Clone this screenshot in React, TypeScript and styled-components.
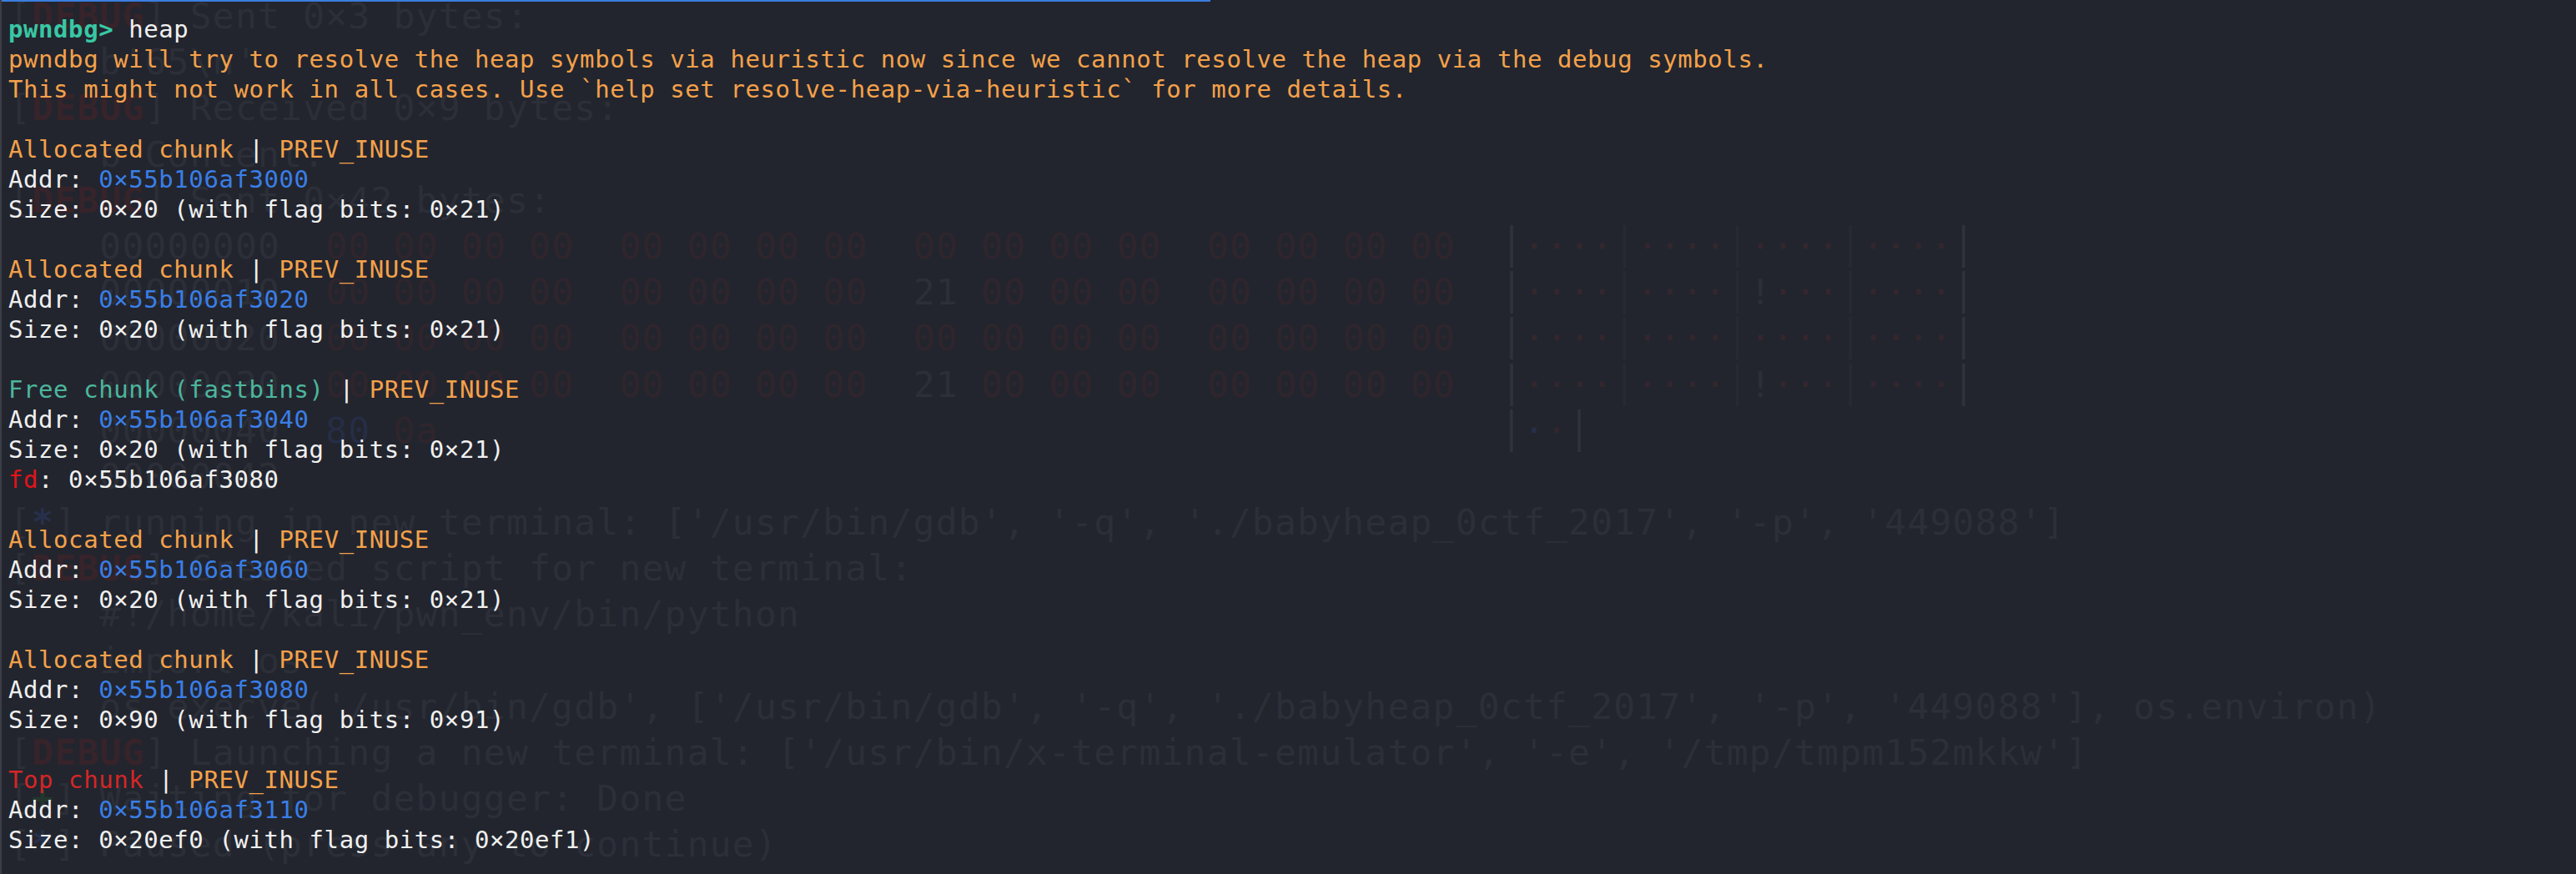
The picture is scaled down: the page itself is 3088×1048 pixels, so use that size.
import React from "react";
import styled, { createGlobalStyle } from "styled-components";

type ForeTone = "white" | "prompt" | "orange" | "blue" | "teal" | "red" | "topred";
type GhostTone = "text" | "debug" | "zero" | "high" | "star" | "plus" | "sep" | "sepDim" | "dotRed" | "dotBlue";

type Seg<T> = [string, T];

const Global = createGlobalStyle`
  html, body {
    margin: 0;
    padding: 0;
    background: #22252e;
  }
  body {
    overflow: hidden;
  }
`;

const Screen = styled.div`
  width: 3088px;
  height: 1048px;
  box-sizing: border-box;
  background: #22252e;
  border-left: 2px solid #3a3d45;
  display: flex;
  flex-direction: column;
  overflow: hidden;
`;

const ProgressBar = styled.div`
  flex: 0 0 2px;
  width: 1449px;
  background: #3b7ddd;
  position: relative;
  z-index: 2;
`;

const Stack = styled.div`
  flex: 1;
  min-height: 0;
  display: grid;
  grid-template: 1fr / 1fr;
  & > * {
    grid-area: 1 / 1;
  }
`;

const GhostLayer = styled.div`
  margin-top: -10px;
  padding-left: 9px;
  font-family: "DejaVu Sans Mono", "Liberation Mono", monospace;
  font-size: 43px;
  letter-spacing: 1.2px;
  line-height: 55.2px;
  color: #2d3039;
  white-space: pre;
`;

const GhostLine = styled.div`
  height: 55.2px;
`;

const ghostColors: Record<GhostTone, string> = {
  text: "#2c2f38",
  debug: "#37232a",
  zero: "#30252d",
  high: "#262d45",
  star: "#27304b",
  plus: "#24372e",
  sep: "#30333b",
  sepDim: "#272a33",
  dotRed: "#35262e",
  dotBlue: "#272e48",
};

const GhostSpan = styled.span<{ $tone: GhostTone }>`
  color: ${(p) => ghostColors[p.$tone]};
  font-weight: ${(p) => (p.$tone === "debug" || p.$tone === "star" || p.$tone === "plus" ? 700 : 400)};
`;

const ForeLayer = styled.div`
  padding: 15px 0 0 8px;
  font-family: "DejaVu Sans Mono", "Liberation Mono", monospace;
  font-size: 29px;
  letter-spacing: 0.57px;
  line-height: 36px;
  white-space: pre;
`;

const ForeLine = styled.div`
  height: 36px;
`;

const foreColors: Record<ForeTone, string> = {
  white: "#f0f0f0",
  prompt: "#38c8a4",
  orange: "#f4a14a",
  blue: "#3a7ee6",
  teal: "#4cb69c",
  red: "#e0141a",
  topred: "#d42626",
};

const ForeSpan = styled.span<{ $tone: ForeTone }>`
  color: ${(p) => foreColors[p.$tone]};
  font-weight: ${(p) => (p.$tone === "prompt" ? 700 : 400)};
`;

/* ---------- ghost (background terminal) content ---------- */

const dbg = (rest: string): Seg<GhostTone>[] => [
  ["[", "text"],
  ["DEBUG", "debug"],
  ["] " + rest, "text"],
];

const hexRow = (offset: string, has21: boolean): Seg<GhostTone>[] => {
  const segs: Seg<GhostTone>[] = [["    " + offset + "  ", "text"]];
  for (let g = 0; g < 4; g++) {
    for (let b = 0; b < 4; b++) {
      const is21 = has21 && g === 2 && b === 0;
      segs.push([is21 ? "21" : "00", is21 ? "text" : "zero"]);
      segs.push([b < 3 ? " " : "  ", "text"]);
    }
  }
  segs.push(["│", "sep"]);
  for (let g = 0; g < 4; g++) {
    if (has21 && g === 2) {
      segs.push(["!", "text"]);
      segs.push(["···", "dotRed"]);
    } else {
      segs.push(["····", "dotRed"]);
    }
    segs.push(["│", g < 3 ? "sepDim" : "sep"]);
  }
  return segs;
};

const ghostLines: Seg<GhostTone>[][] = [
  dbg("Sent 0×3 bytes:"),
  [["    b'65\\n'", "text"]],
  dbg("Received 0×9 bytes:"),
  [["    b'Content: '", "text"]],
  dbg("Sent 0×42 bytes:"),
  hexRow("00000000", false),
  hexRow("00000010", true),
  hexRow("00000020", false),
  hexRow("00000030", true),
  [
    ["    00000040  ", "text"],
    ["80", "high"],
    [" ", "text"],
    ["0a", "zero"],
    [" ".repeat(47), "text"],
    ["│", "sep"],
    ["·", "dotBlue"],
    ["·", "dotRed"],
    ["│", "sep"],
  ],
  [["    00000042", "text"]],
  [
    ["[", "text"],
    ["*", "star"],
    ["] running in new terminal: ['/usr/bin/gdb', '-q', './babyheap_0ctf_2017', '-p', '449088']", "text"],
  ],
  dbg("Created script for new terminal:"),
  [["    #!/home/kali/pwn_env/bin/python", "text"]],
  [["    import os", "text"]],
  [["    os.execve('/usr/bin/gdb', ['/usr/bin/gdb', '-q', './babyheap_0ctf_2017', '-p', '449088'], os.environ)", "text"]],
  dbg("Launching a new terminal: ['/usr/bin/x-terminal-emulator', '-e', '/tmp/tmpm152mkkw']"),
  [
    ["[", "text"],
    ["+", "plus"],
    ["] Waiting for debugger: Done", "text"],
  ],
  [
    ["[", "text"],
    ["*", "star"],
    ["] Paused (press any to continue)", "text"],
  ],
];

/* ---------- foreground (pwndbg) content ---------- */

const header = (label: string, tone: ForeTone): Seg<ForeTone>[] => [
  [label, tone],
  [" | ", "white"],
  ["PREV_INUSE", "orange"],
];
const addr = (a: string): Seg<ForeTone>[] => [
  ["Addr: ", "white"],
  [a, "blue"],
];
const size = (s: string, f: string): Seg<ForeTone>[] => [["Size: " + s + " (with flag bits: " + f + ")", "white"]];
const blank: Seg<ForeTone>[] = [];

const foreLines: Seg<ForeTone>[][] = [
  [
    ["pwndbg>", "prompt"],
    [" heap", "white"],
  ],
  [["pwndbg will try to resolve the heap symbols via heuristic now since we cannot resolve the heap via the debug symbols.", "orange"]],
  [["This might not work in all cases. Use `help set resolve-heap-via-heuristic` for more details.", "orange"]],
  blank,
  header("Allocated chunk", "orange"),
  addr("0×55b106af3000"),
  size("0×20", "0×21"),
  blank,
  header("Allocated chunk", "orange"),
  addr("0×55b106af3020"),
  size("0×20", "0×21"),
  blank,
  header("Free chunk (fastbins)", "teal"),
  addr("0×55b106af3040"),
  size("0×20", "0×21"),
  [
    ["fd", "red"],
    [": 0×55b106af3080", "white"],
  ],
  blank,
  header("Allocated chunk", "orange"),
  addr("0×55b106af3060"),
  size("0×20", "0×21"),
  blank,
  header("Allocated chunk", "orange"),
  addr("0×55b106af3080"),
  size("0×90", "0×91"),
  blank,
  header("Top chunk", "topred"),
  addr("0×55b106af3110"),
  size("0×20ef0", "0×20ef1"),
];

export default function App() {
  return (
    <>
      <Global />
      <Screen>
        <ProgressBar />
        <Stack>
          <GhostLayer aria-hidden="true">
            {ghostLines.map((line, i) => (
              <GhostLine key={i}>
                {line.map(([t, tone], j) => (
                  <GhostSpan key={j} $tone={tone}>
                    {t}
                  </GhostSpan>
                ))}
              </GhostLine>
            ))}
          </GhostLayer>
          <ForeLayer>
            {foreLines.map((line, i) => (
              <ForeLine key={i}>
                {line.map(([t, tone], j) => (
                  <ForeSpan key={j} $tone={tone}>
                    {t}
                  </ForeSpan>
                ))}
              </ForeLine>
            ))}
          </ForeLayer>
        </Stack>
      </Screen>
    </>
  );
}
